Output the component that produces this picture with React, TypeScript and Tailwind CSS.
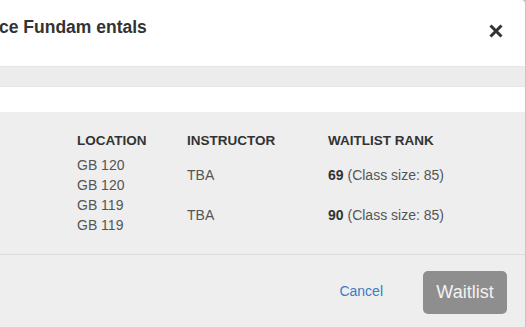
import React from "react";

const rows = [
  { rooms: ["GB 120", "GB 120"], instructor: "TBA", rank: "69", size: 85 },
  { rooms: ["GB 119", "GB 119"], instructor: "TBA", rank: "90", size: 85 },
];

export default function App() {
  return (
    <div
      className="flex h-[327px] w-[526px] overflow-hidden bg-[#c4c4c4]"
      style={{ fontFamily: '"Liberation Sans", Arial, sans-serif' }}
    >
      <div className="flex w-[525px] flex-col rounded-tr-[4px] bg-white">
        {/* header */}
        <div className="flex h-[66px] items-start justify-between">
          <h2 className="mt-[17px] -ml-px text-[17.5px] font-bold leading-[20px] text-[#333]">
            ce Fundam entals
          </h2>
          <button className="mr-[22px] mt-[24px] text-[#333]" aria-label="Close">
            <svg width="14" height="14" viewBox="0 0 14 14">
              <path d="M1.5 1.5 L12.5 12.5 M12.5 1.5 L1.5 12.5" stroke="currentColor" strokeWidth="3" />
            </svg>
          </button>
        </div>

        <div className="h-[21px] border-y border-[#e6e6e6] bg-[#ececec]" />
        <div className="h-[25px] bg-white" />

        {/* section details */}
        <div className="h-[143px] border-b border-[#dcdcdc] bg-[#eeeeee] pl-[77px] pt-[21px]">
          <div className="flex text-[13.5px] font-bold leading-[16px] text-[#333]">
            <div className="w-[110px]">LOCATION</div>
            <div className="w-[141px]">INSTRUCTOR</div>
            <div>WAITLIST RANK</div>
          </div>
          <div className="mt-[6px] flex flex-col text-[14px] leading-[20px] text-[#555]">
            {rows.map((r, i) => (
              <div key={i} className="flex items-center">
                <div className="w-[110px]">
                  {r.rooms.map((room, j) => (
                    <div key={j}>{room}</div>
                  ))}
                </div>
                <div className="w-[141px]">{r.instructor}</div>
                <div>
                  <span className="font-bold text-[#333]">{r.rank}</span> (Class size: {r.size})
                </div>
              </div>
            ))}
          </div>
        </div>

        {/* footer */}
        <div className="flex flex-1 items-center justify-end bg-[#eeeeee] pr-[18px]">
          <button className="mr-[40px] text-[14px] text-[#3b7cc4]">Cancel</button>
          <button className="mt-[2px] h-[43px] w-[84px] rounded-[5px] bg-[#8e8e8e] text-[18px] text-[#f2f2f2]">
            Waitlist
          </button>
        </div>
      </div>
    </div>
  );
}
